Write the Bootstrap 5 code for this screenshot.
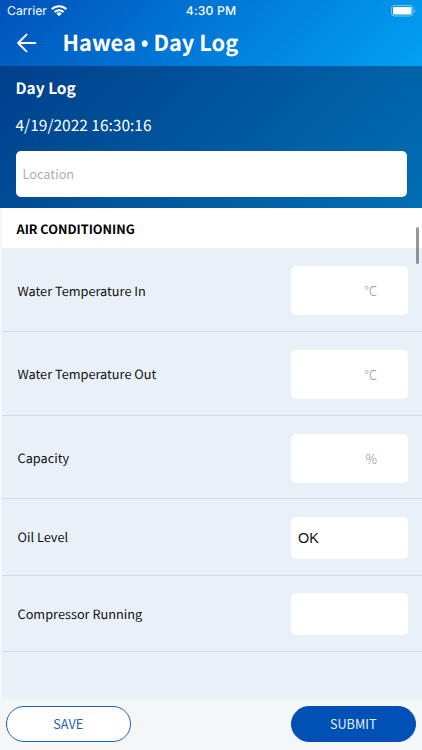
<!DOCTYPE html>
<html lang="en">
<head>
<meta charset="utf-8">
<meta name="viewport" content="width=device-width, initial-scale=1">
<title>Hawea • Day Log</title>
<link href="https://cdn.jsdelivr.net/npm/bootstrap@5.3.0/dist/css/bootstrap.min.css" rel="stylesheet">
<style>
body{font-family:"Noto Sans CJK SC","Noto Sans",sans-serif;font-size:12.75px;line-height:20px;color:#111;background:#f4f6f8;height:750px;overflow:hidden;text-rendering:geometricPrecision}
.app-head{height:66px;background:linear-gradient(135deg,#0052b9 0%,#0078d7 48%,#02a1f2 100%)}
.status{height:22px;padding:0 6px 0 7px;font-family:Inter,sans-serif;font-size:12.2px;line-height:22px;letter-spacing:0}
.status .clock{font-weight:500;letter-spacing:.15px}
.title-row{height:44px;padding-left:16px}
.app-title{font-size:21.8px;line-height:30px;font-weight:700;margin:-1px 0 0 24.5px;white-space:nowrap}
.app-title span{font-family:"Open Sans","Noto Sans",sans-serif;font-size:20.5px}
.log-head{height:142px;padding:12px 15.5px 0;background:linear-gradient(135deg,#003f8b 0%,#00559c 45%,#006fb3 100%)}
.log-title{font-size:15.5px;line-height:20px;font-weight:700}
.log-date{font-size:15.5px;line-height:20px;margin-top:17px}
.form-control,.form-control:focus{border:0;border-radius:5px;color:#111;background:#fff;box-shadow:none}
.form-control::placeholder{color:#aeaeae;opacity:1}
.loc{height:46px;margin-top:16px;padding:0 7px 1px;font-size:12.75px}
.sheet{height:490.5px;margin-left:2px;background:#e9f0f7}
.group-title{height:40.4px;padding-left:14.5px;font-size:12.7px;line-height:42px;font-weight:700;color:#000}
.entry{height:83.6px;padding:2.4px 14.5px 0 15.5px;border-bottom:1.5px solid #cfdced}
.entry.short{height:76.5px;padding-top:1.8px}
.entry .form-control{width:116.5px;height:49px;padding:0 30.5px 0 7px;font-size:12.9px;text-align:right}
.entry .form-control::placeholder{font-weight:300;color:#8f8f8f}
.entry.short .form-control{height:42px;text-align:left;padding-right:7px;font-family:"Liberation Sans",Arial,sans-serif;font-size:14.4px}
.entry.short label{margin-top:-1px}
.scroll-thumb{position:absolute;right:3px;top:227px;width:3.5px;height:37px;border-radius:2px;background:rgba(80,80,88,.6)}
.actions{height:51.5px;padding:7.5px 6px 0 5.5px}
.actions .btn{width:125.5px;height:36px;padding:0;font-size:12.7px;line-height:34px;border:1px solid #1a5fbd}
.btn-save{background:#fff!important;color:#1a5fbd!important}
.btn-submit{background:#0050b5!important;color:#e6f0ff!important;border-color:#0050b5!important}
</style>
<script src="https://cdn.jsdelivr.net/npm/bootstrap@5.3.0/dist/js/bootstrap.bundle.min.js"></script>
</head>
<body class="d-flex flex-column position-relative">
<header class="app-head text-white flex-shrink-0">
  <div class="status d-flex justify-content-between align-items-center position-relative">
    <div class="d-flex align-items-center"><span>Carrier</span>
      <svg class="ms-1" width="17" height="13" viewBox="0 0 17 13" fill="none" stroke="#fff" stroke-width="2.1"><path d="M1.2 4.7a10.4 10.4 0 0 1 14.6 0M4 7.6a6.4 6.4 0 0 1 9 0" transform="translate(-.4 -.5)"/><path d="M8.1 11.3 5.4 8.6a3.9 3.9 0 0 1 5.4 0z" fill="#fff" stroke="none"/></svg>
    </div>
    <span class="clock position-absolute start-50 translate-middle-x">4:30 PM</span>
    <svg width="25" height="12" viewBox="0 0 25 12"><rect x=".5" y=".5" width="21.5" height="10.5" rx="2.8" fill="none" stroke="#fff" stroke-opacity=".45"/><rect x="2" y="2" width="18.5" height="7.5" rx="1.3" fill="#fff"/><path d="M23.3 4v3.6c1.5-.5 1.5-3.1 0-3.6z" fill="#fff" fill-opacity=".5"/></svg>
  </div>
  <div class="title-row d-flex align-items-center">
    <svg width="22" height="22" viewBox="0 0 22 22" fill="none" stroke="#fff" stroke-width="2" stroke-linecap="round" stroke-linejoin="round"><path d="M19.3 10H2.3M10.5 1.6 2.1 10l8.4 8.4"/></svg>
    <h1 class="app-title">Hawea <span>•</span> Day Log</h1>
  </div>
</header>
<section class="log-head text-white flex-shrink-0">
  <h2 class="log-title mb-0">Day Log</h2>
  <div class="log-date">4/19/2022 16:30:16</div>
  <input class="form-control loc" placeholder="Location" aria-label="Location">
</section>
<main class="sheet flex-shrink-0">
  <div class="group-title bg-white">AIR CONDITIONING</div>
  <div class="entry d-flex align-items-center justify-content-between"><label>Water Temperature In</label><input class="form-control" placeholder="°C"></div>
  <div class="entry d-flex align-items-center justify-content-between"><label>Water Temperature Out</label><input class="form-control" placeholder="°C"></div>
  <div class="entry d-flex align-items-center justify-content-between"><label>Capacity</label><input class="form-control" placeholder="%"></div>
  <div class="entry short d-flex align-items-center justify-content-between"><label>Oil Level</label><input class="form-control" value="OK"></div>
  <div class="entry short d-flex align-items-center justify-content-between"><label>Compressor Running</label><input class="form-control"></div>
</main>
<footer class="actions d-flex justify-content-between align-items-start flex-shrink-0">
  <button class="btn btn-save rounded-pill">SAVE</button>
  <button class="btn btn-submit rounded-pill">SUBMIT</button>
</footer>
<div class="scroll-thumb"></div>
</body>
</html>
